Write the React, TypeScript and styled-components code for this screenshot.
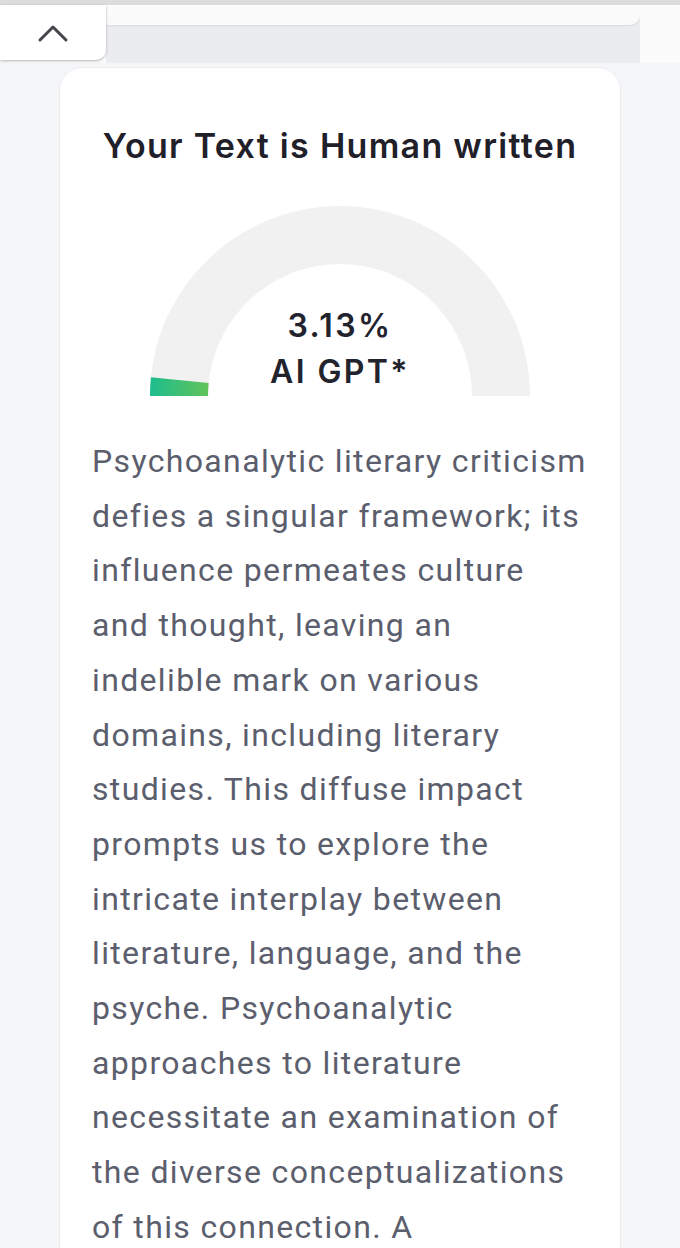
import React from "react";
import styled, { createGlobalStyle } from "styled-components";

const Global = createGlobalStyle`
  html, body { margin: 0; padding: 0; }
  body { background: #f5f6f8; font-family: Roboto, "Noto Sans", sans-serif; }
`;

const Page = styled.div`
  width: 680px;
  height: 1248px;
  overflow: hidden;
  background: #f5f6f8;
`;

const TopLine = styled.div`
  height: 5px;
  background: #dcdcdc;
`;

const HeaderRow = styled.div`
  display: flex;
  height: 58px;
  background: #fbfbfc;
`;

const Tab = styled.button`
  width: 106px;
  height: 55px;
  border: none;
  margin: 0;
  padding: 0;
  background: #ffffff;
  border-radius: 0 0 10px 0;
  box-shadow: 0 1px 3px rgba(0, 0, 0, 0.28);
  display: flex;
  align-items: center;
  justify-content: center;
  color: #46464a;
  position: relative;
  z-index: 1;
`;

const Tray = styled.div`
  flex: 1;
  margin-right: 40px;
  margin-top: 10px;
  background: #ebecf0;
  display: flex;
  flex-direction: column;
  border-radius: 10px 0 0 0;
`;

const TrayStrip = styled.div`
  height: 10px;
  background: #fafafb;
  border-radius: 8px 0 16px 0;
  box-shadow: 0 1px 2px rgba(0, 0, 0, 0.08);
`;

const Card = styled.section`
  margin: 5px 60px 0;
  background: #ffffff;
  border-radius: 22px 22px 0 0;
  box-shadow: 0 0 0 1px #eceef2;
  padding: 58px 32px 0;
  min-height: 1200px;
`;

const Title = styled.h1`
  margin: 0;
  text-align: center;
  font-family: Inter, Roboto, sans-serif;
  font-weight: 600;
  font-size: 34px;
  line-height: 40px;
  color: #1f2029;
  letter-spacing: 1.3px;
  white-space: nowrap;
`;

const GaugeWrap = styled.div`
  position: relative;
  width: 380px;
  height: 190px;
  margin: 40px auto 0;
`;

const GaugeLabel = styled.div`
  position: absolute;
  left: 0;
  right: 0;
  bottom: 1px;
  text-align: center;
  font-family: Inter, Roboto, sans-serif;
  font-weight: 600;
  font-size: 32px;
  line-height: 46px;
  color: #22232d;
  letter-spacing: 2.4px;
`;

const Body = styled.div`
  margin-top: 38px;
  font-family: Roboto, sans-serif;
  font-size: 32px;
  line-height: 54.7px;
  color: #5b5e6d;
  letter-spacing: 1.35px;
`;

const Line = styled.span`
  display: block;
  white-space: nowrap;
`;

const lines = [
  "Psychoanalytic literary criticism",
  "defies a singular framework; its",
  "influence permeates culture",
  "and thought, leaving an",
  "indelible mark on various",
  "domains, including literary",
  "studies. This diffuse impact",
  "prompts us to explore the",
  "intricate interplay between",
  "literature, language, and the",
  "psyche. Psychoanalytic",
  "approaches to literature",
  "necessitate an examination of",
  "the diverse conceptualizations",
  "of this connection. A",
];

function ChevronUpIcon() {
  return (
    <svg width="32" height="20" viewBox="0 0 32 20" fill="none">
      <polyline
        points="3,17 16,4 29,17"
        stroke="currentColor"
        strokeWidth="3"
        strokeLinecap="round"
        strokeLinejoin="round"
      />
    </svg>
  );
}

function Gauge({ percent }: { percent: number }) {
  const R = 190;
  const r = 132;
  const cx = 190;
  const cy = 190;
  const theta = Math.PI - (percent / 100) * Math.PI;
  const ox = cx + R * Math.cos(theta);
  const oy = cy - R * Math.sin(theta);
  const ix = cx + r * Math.cos(theta);
  const iy = cy - r * Math.sin(theta);
  return (
    <svg width="380" height="190" viewBox="0 0 380 190">
      <defs>
        <linearGradient id="g" x1="0" y1="0" x2="1" y2="0">
          <stop offset="0" stopColor="#1dbd8e" />
          <stop offset="1" stopColor="#62c35a" />
        </linearGradient>
      </defs>
      <path
        d={`M 0 190 A ${R} ${R} 0 0 1 380 190 L ${cx + r} 190 A ${r} ${r} 0 0 0 ${cx - r} 190 Z`}
        fill="#f1f1f1"
      />
      <path
        d={`M 0 190 A ${R} ${R} 0 0 1 ${ox} ${oy} L ${ix} ${iy} A ${r} ${r} 0 0 0 ${cx - r} 190 Z`}
        fill="url(#g)"
      />
    </svg>
  );
}

export default function App() {
  return (
    <Page>
      <Global />
      <TopLine />
      <HeaderRow>
        <Tab aria-label="Collapse">
          <ChevronUpIcon />
        </Tab>
        <Tray>
          <TrayStrip />
        </Tray>
      </HeaderRow>
      <Card>
        <Title>Your Text is Human written</Title>
        <GaugeWrap>
          <Gauge percent={3.13} />
          <GaugeLabel>
            3.13%
            <br />
            AI GPT*
          </GaugeLabel>
        </GaugeWrap>
        <Body>
          {lines.map((l, i) => (
            <Line key={i}>{l}</Line>
          ))}
        </Body>
      </Card>
    </Page>
  );
}
